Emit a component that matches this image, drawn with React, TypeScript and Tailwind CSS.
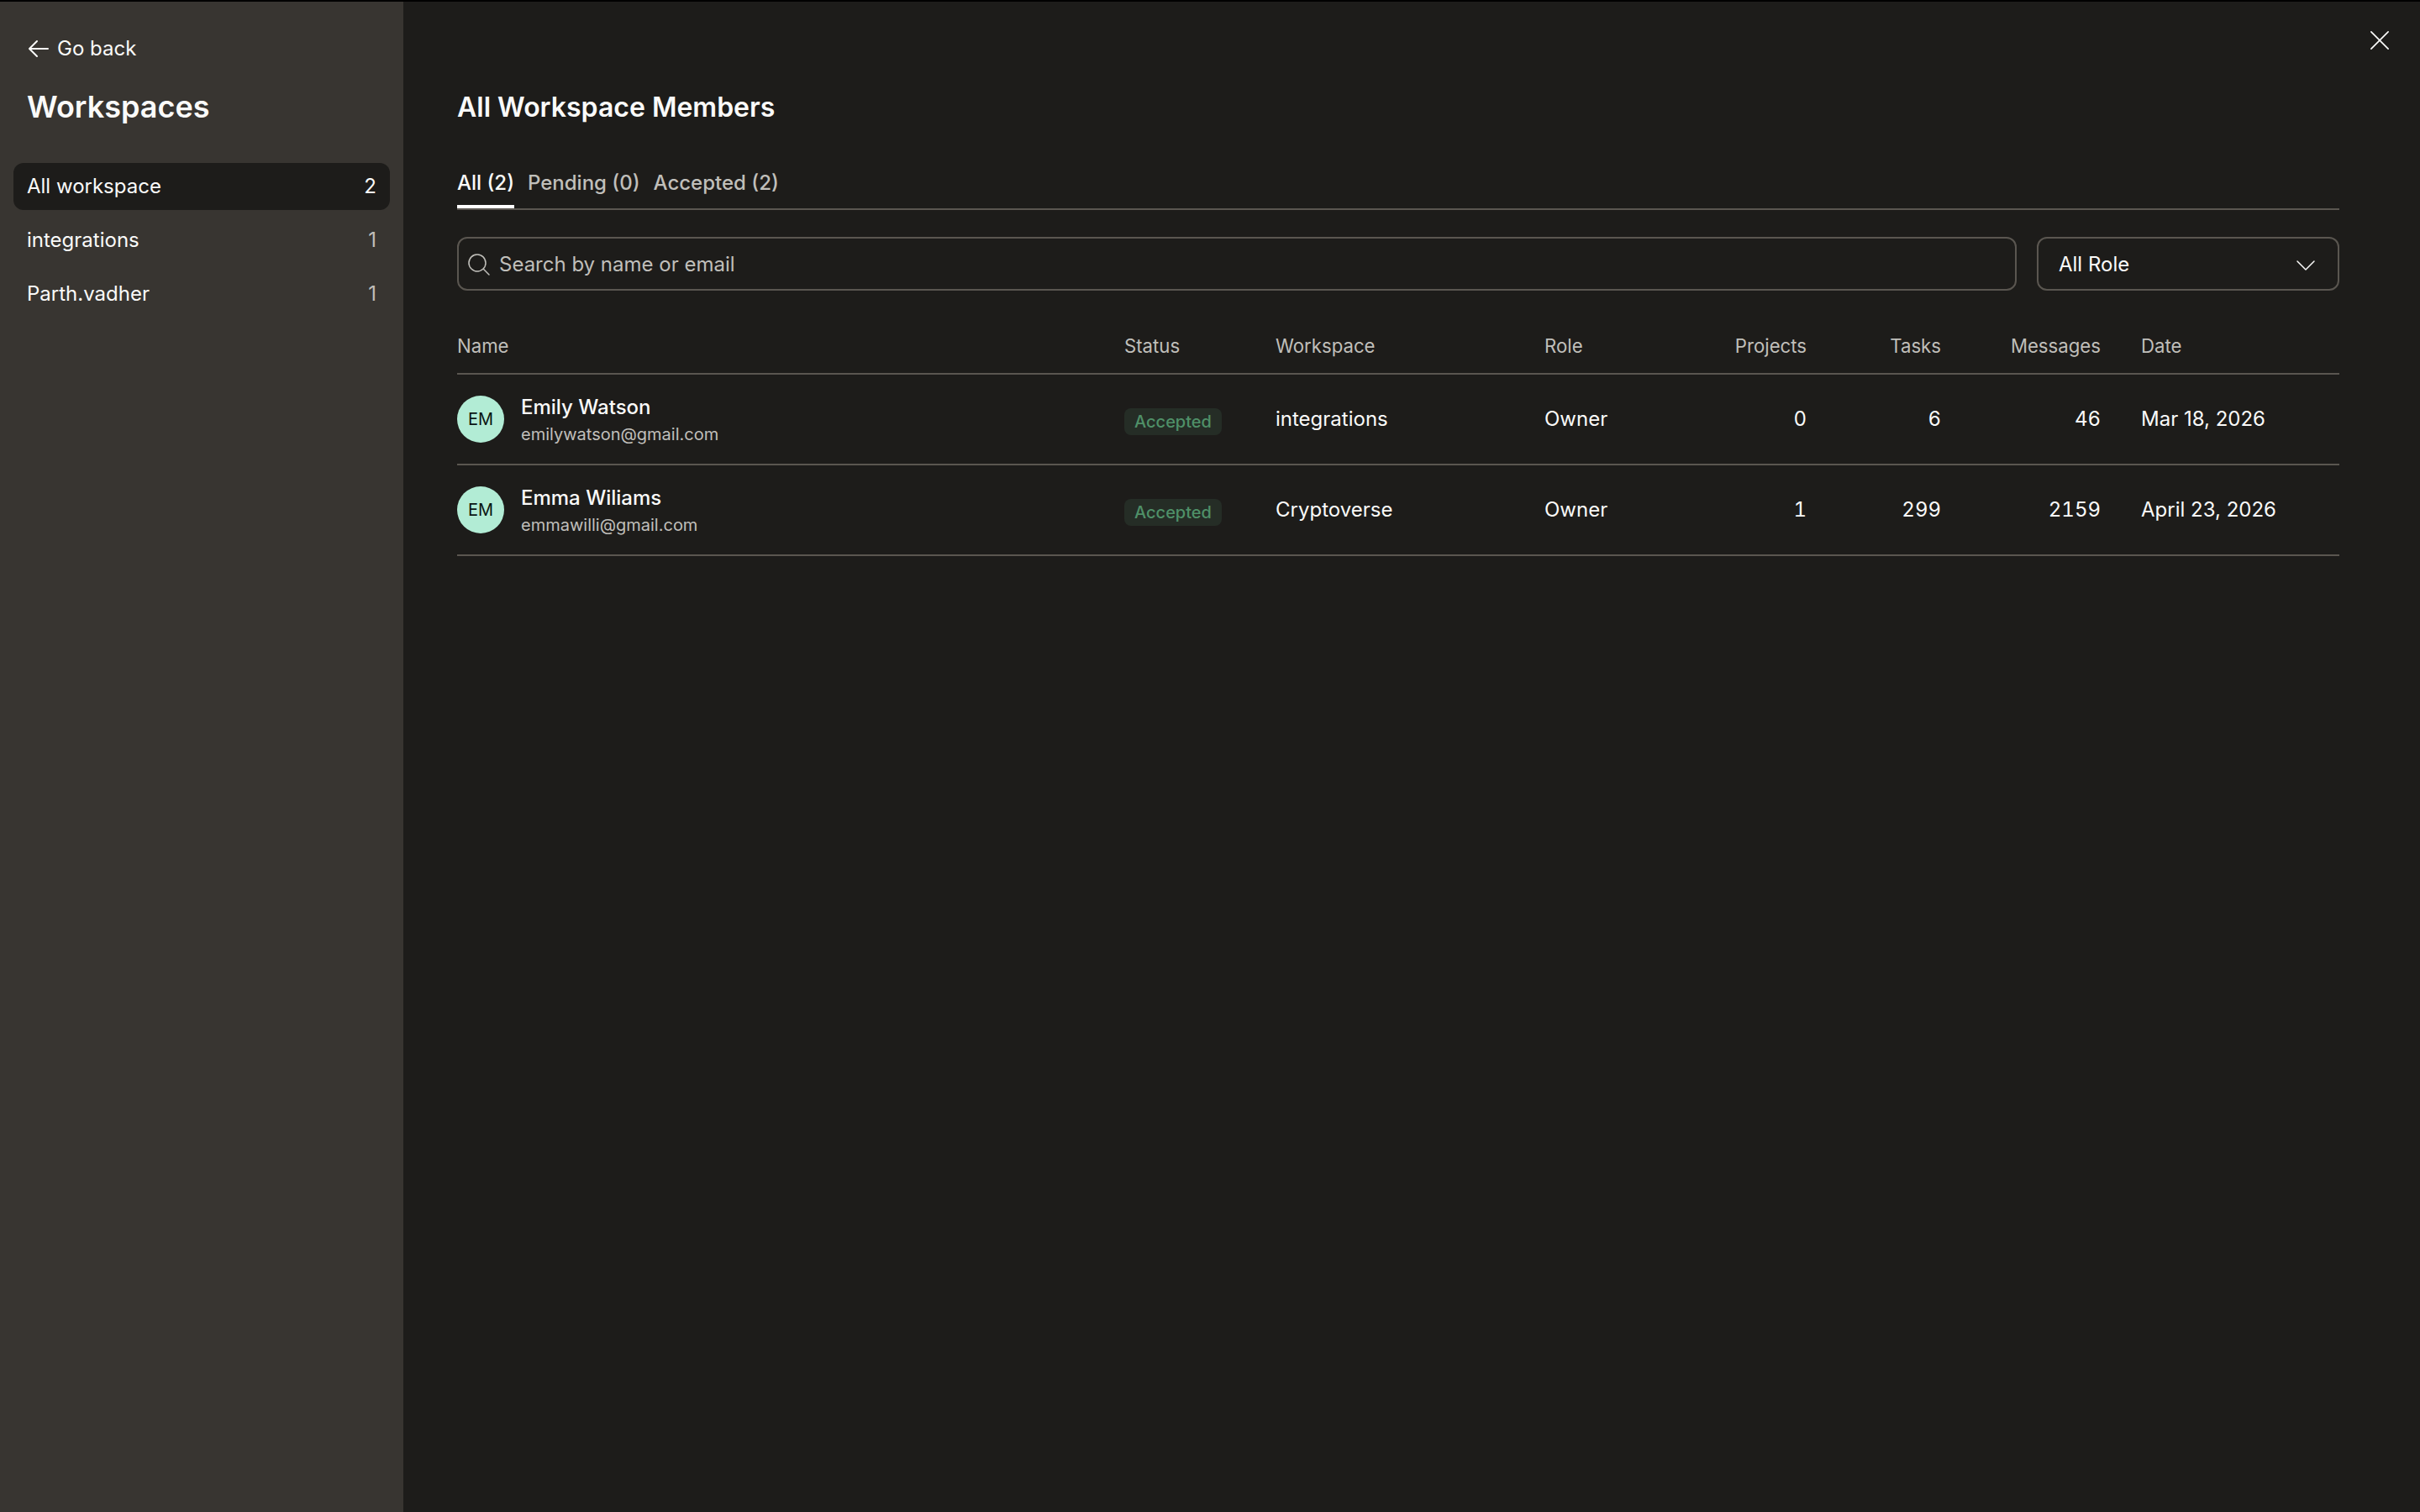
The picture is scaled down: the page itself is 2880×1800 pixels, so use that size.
import { PiArrowLeft, PiCaretDownLight, PiMagnifyingGlassLight, PiXLight } from 'react-icons/pi';

const rowGrid = 'grid grid-cols-[794px_180px_320px_162px_150px_160px_190px_48px_1fr] items-center';

const workspaces = [
  { name: 'All workspace', count: 2, active: true },
  { name: 'integrations', count: 1, active: false },
  { name: 'Parth.vadher', count: 1, active: false },
];

const members = [
  { name: 'Emily Watson', email: 'emilywatson@gmail.com', workspace: 'integrations', projects: 0, tasks: 6, messages: 46, date: 'Mar 18, 2026' },
  { name: 'Emma Wiliams', email: 'emmawilli@gmail.com', workspace: 'Cryptoverse', projects: 1, tasks: 299, messages: 2159, date: 'April 23, 2026' },
];

const App = () => {
  return (
    <div className="flex h-[1800px] w-[2880px] overflow-hidden border-t-2 border-black bg-[#1d1c1a] font-['Inter',sans-serif] text-[24px] text-[#fafaf9]">
      {/* Sidebar */}
      <aside className="w-[480px] shrink-0 bg-[#383531] px-4">
        <div className="mt-[38px] flex h-9 items-center gap-1.5 pl-3.5">
          <PiArrowLeft className="size-8" />
          <span>Go back</span>
        </div>
        <h1 className="mt-[27px] mb-[43px] pl-4 text-[36px] leading-[48px] font-semibold">Workspaces</h1>
        <nav className="flex flex-col gap-2">
          {workspaces.map((w) => (
            <div
              key={w.name}
              className={w.active ? 'flex h-14 items-center justify-between rounded-xl bg-[#1d1c1a] px-4' : 'flex h-14 items-center justify-between rounded-xl px-4'}
            >
              <span>{w.name}</span>
              <span className={w.active ? '' : 'text-[#c0bfba]'}>{w.count}</span>
            </div>
          ))}
        </nav>
      </aside>

      {/* Main panel */}
      <main className="relative flex-1 pr-24 pl-16">
        <button className="absolute top-7 right-[30px] text-[#fafaf9]">
          <PiXLight className="size-9" />
        </button>

        <h2 className="mt-[106px] text-[32px] leading-10 font-semibold">All Workspace Members</h2>

        <div className="mt-11 flex gap-4 border-b-2 border-[#5a5650]">
          <div className="h-14 border-b-4 border-white pt-2 leading-9 font-medium">All (2)</div>
          <div className="h-14 pt-2 leading-9 font-medium text-[#c0bfba]">Pending (0)</div>
          <div className="h-14 pt-2 leading-9 font-medium text-[#c0bfba]">Accepted (2)</div>
        </div>

        <div className="mt-8 flex gap-6">
          <div className="flex h-16 flex-1 items-center gap-2 rounded-xl border-2 border-[#5a5650] px-2 pt-0.5 text-[#c0bfba]">
            <PiMagnifyingGlassLight className="size-8" />
            <span>Search by name or email</span>
          </div>
          <div className="flex h-16 w-[360px] items-center justify-between rounded-xl border-2 border-[#5a5650] pt-0.5 pr-[22px] pl-6">
            <span>All Role</span>
            <PiCaretDownLight className="size-8" />
          </div>
        </div>

        {/* Table */}
        <div className="mt-[50px]">
          <div className={`${rowGrid} h-[50px] border-b-2 border-[#5a5650] pb-4 text-[22.2px] leading-8 text-[#c0bfba]`}>
            <div>Name</div>
            <div>Status</div>
            <div>Workspace</div>
            <div>Role</div>
            <div className="text-right">Projects</div>
            <div className="text-right">Tasks</div>
            <div className="text-right">Messages</div>
            <div />
            <div>Date</div>
          </div>
          {members.map((m) => (
            <div key={m.email} className={`${rowGrid} h-[108px] border-b-2 border-[#5a5650]`}>
              <div className="flex items-center gap-5">
                <div className="flex size-14 items-center justify-center rounded-full bg-[#b2ecd5] text-[20px] text-[#0b1512]">EM</div>
                <div className="pt-0.5">
                  <div className="leading-8 font-medium">{m.name}</div>
                  <div className="mt-0.5 text-[20px] leading-7 text-[#c0bfba]">{m.email}</div>
                </div>
              </div>
              <div>
                <span className="mt-1.5 flex h-8 w-[116px] items-center justify-center rounded-lg bg-[#252d26] text-[20px] font-medium text-[#4f9068]">Accepted</span>
              </div>
              <div>{m.workspace}</div>
              <div>Owner</div>
              <div className="text-right tabular-nums">{m.projects}</div>
              <div className="text-right tabular-nums">{m.tasks}</div>
              <div className="text-right tabular-nums">{m.messages}</div>
              <div />
              <div>{m.date}</div>
            </div>
          ))}
        </div>
      </main>
    </div>
  );
};

export default App;
